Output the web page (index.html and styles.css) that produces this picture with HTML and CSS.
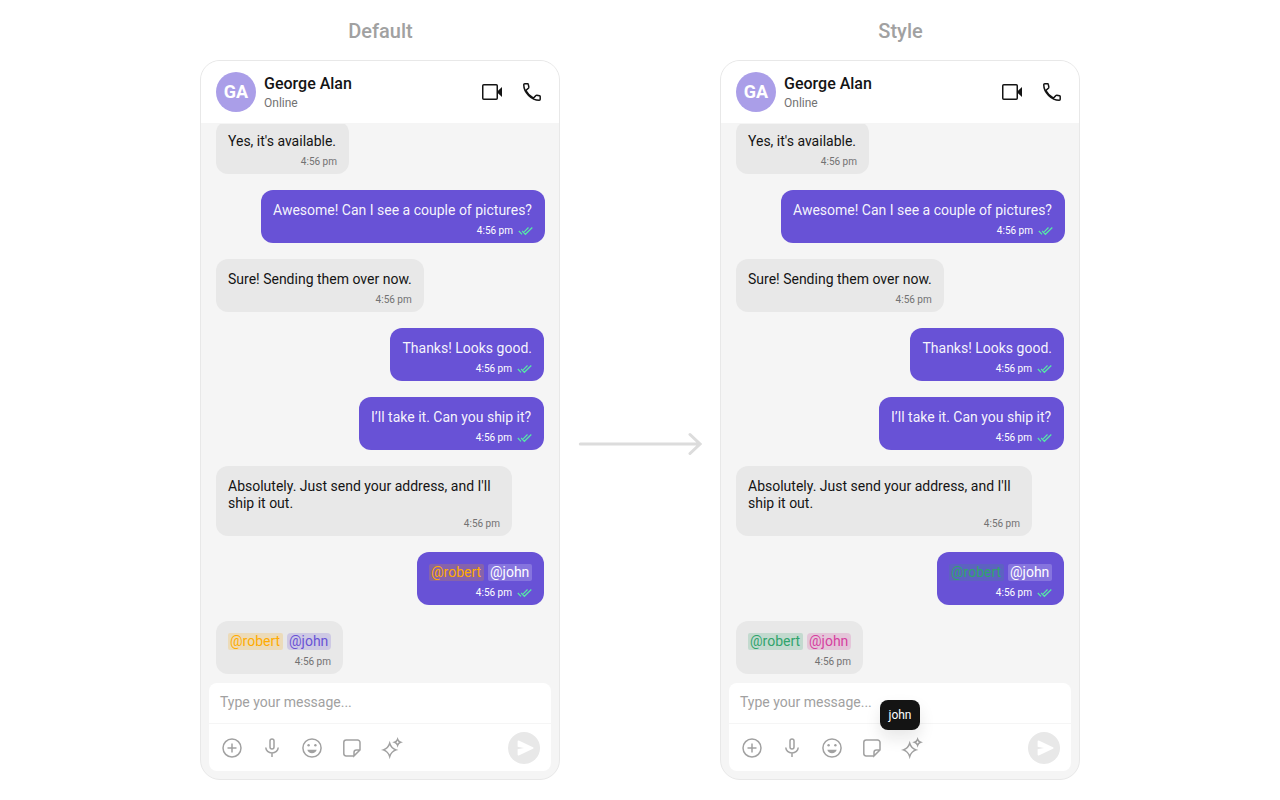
FILE: index.html
```html
<!DOCTYPE html>
<html lang="en">
<head>
<meta charset="utf-8">
<title>Mentions style</title>
<link rel="stylesheet" href="styles.css">
</head>
<body>
<svg class="sprite" aria-hidden="true">
  <symbol id="video" viewBox="0 0 24 24"><rect x="2.75" y="4.75" width="14.5" height="14.5" rx="1" fill="none" stroke="currentColor" stroke-width="1.5"/><path d="M17.500 11.200 22 7v10l-4.500-4.200z" fill="currentColor"/></symbol>
  <symbol id="phone" viewBox="0 0 24 24"><path d="M4.800 3.750h2.700c.4 0 .75.3.8.7l.55 2.700c.1.350 0 .6-.25.850L5.900 10.500c1.700 3.200 4.400 5.900 7.600 7.600l2.450-2.600c.25-.25.5-.3.850-.25l2.700.55c.4.100.7.4.7.800v2.600c0 .6-.4 1.050-1 1.050C11.500 20.250 3.750 12.500 3.750 4.800c0-.6.4-1.050 1.050-1.050z" fill="none" stroke="currentColor" stroke-width="1.5"/></symbol>
  <symbol id="plus" viewBox="0 0 24 24"><circle cx="12" cy="12" r="9"/><path d="M12 7.500v9M7.500 12h9"/></symbol>
  <symbol id="mic" viewBox="0 0 24 24"><rect x="10" y="3" width="4" height="10" rx="2"/><path d="M5.800 11.500a6.200 5.500 0 0 0 12.400 0M12 17v4"/></symbol>
  <symbol id="smile" viewBox="0 0 24 24"><circle cx="12" cy="12" r="9.100"/><g fill="currentColor" stroke="none"><circle cx="8.600" cy="9.300" r="1.200"/><circle cx="15.400" cy="9.300" r="1.200"/><path d="M7.300 13.700h9.400c-.6 2.100-2.400 3.500-4.700 3.500s-4.100-1.400-4.700-3.500z"/></g></symbol>
  <symbol id="sticker" viewBox="0 0 24 24"><path d="M14 19.900H6.200a2.400 2.400 0 0 1-2.400-2.400v-11a2.400 2.400 0 0 1 2.400-2.400h11.400A2.400 2.400 0 0 1 20 6.500V14l-6 5.900v-3.500a2.400 2.400 0 0 1 2.400-2.400H20"/></symbol>
  <symbol id="sparkle" viewBox="0 0 24 24"><path d="M9.700 7.200c1.200 3.900 2.600 5.400 6.400 6.700-3.800 1.300-5.200 2.800-6.400 6.700-1.200-3.900-2.600-5.400-6.400-6.700 3.800-1.300 5.200-2.800 6.400-6.700zM17.600 3.300c.6 1.800 1.200 2.400 3 3-1.800.6-2.400 1.200-3 3-.6-1.800-1.200-2.400-3-3 1.800-.6 2.400-1.200 3-3z"/></symbol>
  <symbol id="send" viewBox="0 0 32 32"><path d="M9.600 9.400v5.300l6.400 1.300-6.400 1.300v5.300c0 .7.600 1 1.200.8l14.200-6.600c.7-.3.7-1.300 0-1.600L10.800 8.600c-.6-.2-1.200.1-1.200.8z" fill="#fff"/></symbol>
  <symbol id="read" viewBox="0 0 16 10"><path d="M1.800 5 5 8.300M5.200 5l3.200 3.300L15.300 1.500M11.500 1.500 7.200 5.800"/></symbol>
</svg>
<main class="board">
  <section class="column">
    <h1 class="title">Default</h1>
    <div class="phone">
      <header class="header">
        <div class="avatar">GA</div>
        <div class="contact"><div class="name">George Alan</div><div class="status">Online</div></div>
        <svg class="call"><use href="#video"/></svg><svg class="call"><use href="#phone"/></svg>
      </header>
      <div class="messages">
        <div class="bubble in first"><p>Yes, it's available.</p><div class="meta">4:56 pm</div></div>
        <div class="bubble out wide"><p>Awesome! Can I see a couple of pictures?</p><div class="meta">4:56 pm<svg><use href="#read"/></svg></div></div>
        <div class="bubble in"><p>Sure! Sending them over now.</p><div class="meta">4:56 pm</div></div>
        <div class="bubble out"><p>Thanks! Looks good.</p><div class="meta">4:56 pm<svg><use href="#read"/></svg></div></div>
        <div class="bubble out ship"><p>I’ll take it. Can you ship it?</p><div class="meta">4:56 pm<svg><use href="#read"/></svg></div></div>
        <div class="bubble in long"><p>Absolutely. Just send your address, and I'll ship it out.</p><div class="meta">4:56 pm</div></div>
        <div class="bubble out"><p class="mentions"><span class="mention orange">@robert</span><span class="mention white">@john</span></p><div class="meta">4:56 pm<svg><use href="#read"/></svg></div></div>
        <div class="bubble in"><p class="mentions"><span class="mention orange">@robert</span><span class="mention violet">@john</span></p><div class="meta">4:56 pm</div></div>
      </div>
      <div class="composer">
        <div class="input">Type your message...</div>
        <div class="tools"><svg><use href="#plus"/></svg><svg><use href="#mic"/></svg><svg><use href="#smile"/></svg><svg><use href="#sticker"/></svg><svg><use href="#sparkle"/></svg><div class="send"><svg><use href="#send"/></svg></div></div>
      </div>
    </div>
  </section>
  <svg class="arrow" viewBox="0 0 124 24"><path d="M2.300 12H121M112 2.500 122 12l-10 9.500"/></svg>
  <section class="column">
    <h1 class="title">Style</h1>
    <div class="phone">
      <header class="header">
        <div class="avatar">GA</div>
        <div class="contact"><div class="name">George Alan</div><div class="status">Online</div></div>
        <svg class="call"><use href="#video"/></svg><svg class="call"><use href="#phone"/></svg>
      </header>
      <div class="messages">
        <div class="bubble in first"><p>Yes, it's available.</p><div class="meta">4:56 pm</div></div>
        <div class="bubble out wide"><p>Awesome! Can I see a couple of pictures?</p><div class="meta">4:56 pm<svg><use href="#read"/></svg></div></div>
        <div class="bubble in"><p>Sure! Sending them over now.</p><div class="meta">4:56 pm</div></div>
        <div class="bubble out"><p>Thanks! Looks good.</p><div class="meta">4:56 pm<svg><use href="#read"/></svg></div></div>
        <div class="bubble out ship"><p>I’ll take it. Can you ship it?</p><div class="meta">4:56 pm<svg><use href="#read"/></svg></div></div>
        <div class="bubble in long"><p>Absolutely. Just send your address, and I'll ship it out.</p><div class="meta">4:56 pm</div></div>
        <div class="bubble out"><p class="mentions"><span class="mention green">@robert</span><span class="mention white">@john</span></p><div class="meta">4:56 pm<svg><use href="#read"/></svg></div></div>
        <div class="bubble in"><p class="mentions"><span class="mention green">@robert</span><span class="mention pink">@john</span></p><div class="meta">4:56 pm</div></div>
      </div>
      <div class="composer">
        <div class="input">Type your message...</div>
        <div class="tools"><svg><use href="#plus"/></svg><svg><use href="#mic"/></svg><svg><use href="#smile"/></svg><svg><use href="#sticker"/></svg><svg><use href="#sparkle"/></svg><div class="send"><svg><use href="#send"/></svg></div></div>
        <div class="tooltip">john</div>
      </div>
    </div>
  </section>
</main>
</body>
</html>
```

FILE: styles.css
```css
* { box-sizing: border-box; }
body { margin: 0; background: #fff; font-family: Roboto, sans-serif; color: #141414; }
h1, p { margin: 0; }
.sprite { position: absolute; width: 0; height: 0; }
.board { width: 1280px; height: 800px; display: flex; justify-content: center; overflow: hidden; }
.column { width: 360px; display: flex; flex-direction: column; }
.title { height: 60px; line-height: 62px; padding-left: 1px; text-align: center; font-size: 20px; font-weight: 500; color: #a1a1a1; }
.phone { height: 720px; display: flex; flex-direction: column; background: #f5f5f5; border: 1px solid #e8e8e8; border-radius: 20px; overflow: hidden; }
.header { height: 63px; flex: none; display: flex; align-items: center; padding: 0 15px; background: #fff; border-bottom: 1px solid #f5f5f5; }
.avatar { width: 40px; height: 40px; border-radius: 50%; background: #aa9ee8; color: #fff; font-size: 18px; font-weight: 700; line-height: 40px; text-align: center; }
.contact { flex: 1; padding: 0 0 0 8px; }
.name { font-size: 16px; line-height: 19px; font-weight: 500; }
.status { font-size: 12px; line-height: 14px; margin-top: 3px; color: #727272; }
.call { width: 24px; height: 24px; color: #141414; }
.call + .call { margin-left: 16px; }
.messages { height: 559px; flex: none; padding: 0 15px 9px; overflow: hidden; display: flex; flex-direction: column; justify-content: flex-end; gap: 16px; }
.bubble { flex: none; padding: 12px 12px 4px; border-radius: 12px; font-size: 14px; line-height: 17px; }
.in { align-self: flex-start; background: #e8e8e8; }
.out { align-self: flex-end; background: #6852d6; color: #fff; }
.out p { color: rgba(255, 255, 255, .95); }
.first { width: 133px; }
.wide { width: 284px; margin-right: -1px; }
.ship { width: 185px; }
.long { width: 296px; }
.meta { height: 16px; margin-top: 4px; display: flex; justify-content: flex-end; align-items: center; gap: 4px; font-size: 10px; line-height: 16px; color: #727272; }
.out .meta { color: #fff; }
.meta svg { width: 16px; height: 10px; fill: none; stroke: #56e8a7; stroke-width: 1.2; }
.mentions { display: flex; gap: 4px; }
.mention { width: 55px; padding-left: 2px; border-radius: 2px; height: 17px; }
.mention + .mention { width: 44px; }
.orange { color: #ffab00; background: rgba(255, 171, 0, .2); }
.white { color: #fff; background: rgba(255, 255, 255, .2); }
.violet { color: #6852d6; background: rgba(104, 82, 214, .2); border-radius: 4px; }
.green { color: #30a46c; background: rgba(48, 164, 108, .2); }
.pink { color: #d6409f; background: rgba(214, 64, 159, .2); border-radius: 4px; }
.composer { position: relative; height: 88px; flex: none; margin: 0 8px; border-radius: 8px; background: #fff; }
.input { height: 41px; line-height: 38px; padding-left: 11px; border-bottom: 1px solid #f5f5f5; font-size: 14px; color: #a1a1a1; }
.tools { height: 48px; display: flex; align-items: center; gap: 16px; padding: 0 11px; color: #a1a1a1; }
.tools > svg { width: 24px; height: 24px; fill: none; stroke: currentColor; stroke-width: 1.5; }
.send { width: 32px; height: 32px; margin-left: auto; border-radius: 50%; background: #e8e8e8; }
.send svg { display: block; width: 32px; height: 32px; }
.tooltip { position: absolute; left: 151px; top: 17px; width: 40px; height: 30px; border-radius: 8px; background: #141414; color: #fff; font-size: 12px; line-height: 30px; text-align: center; box-shadow: 0 8px 16px rgba(20, 20, 20, .1); }
.arrow { width: 124px; height: 24px; margin: 432px 18px 0; fill: none; stroke: #dcdcdc; stroke-width: 3; stroke-linecap: round; }
```
